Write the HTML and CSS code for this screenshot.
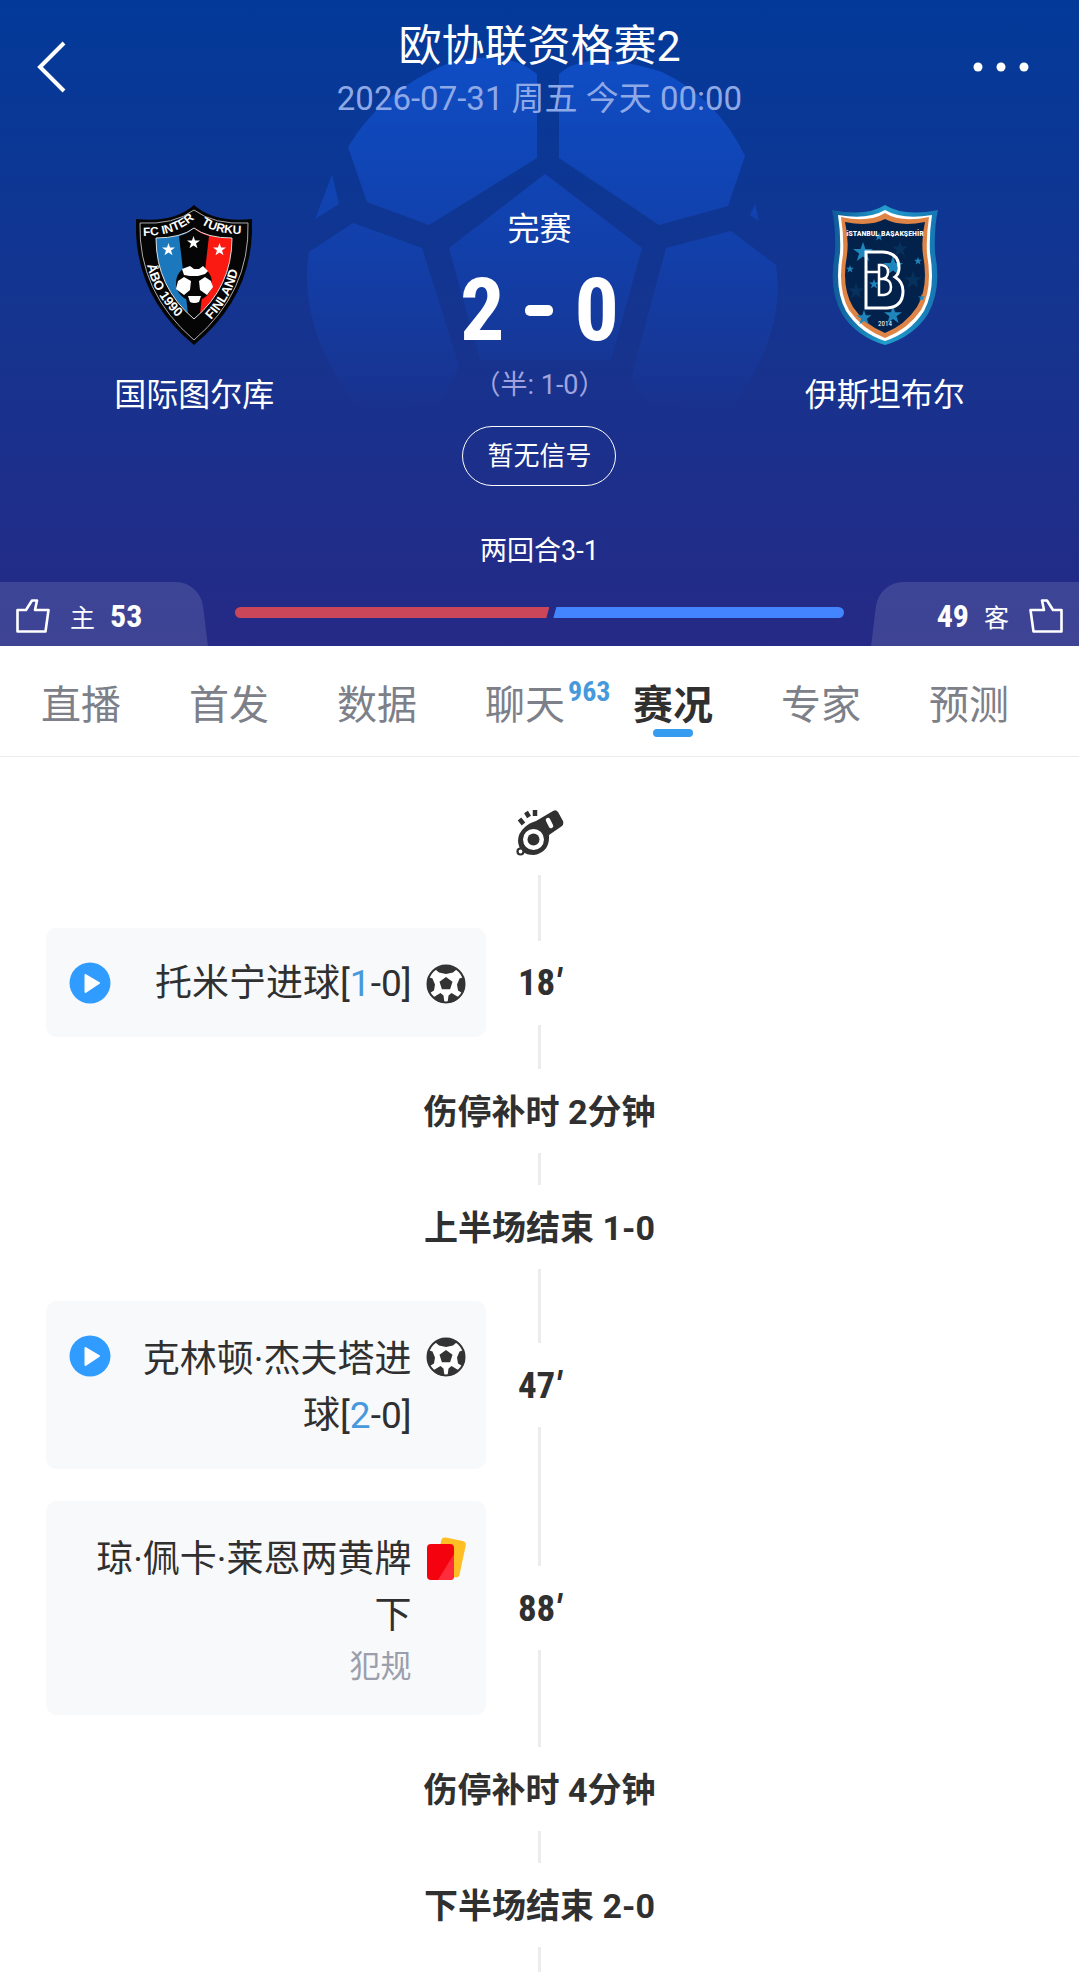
FILE: index.html
```html
<!DOCTYPE html>
<html lang="zh-CN">

<head>
    <meta charset="UTF-8">
    <meta name="viewport" content="width=device-width, initial-scale=1.0">
    <title>欧协联资格赛2</title>
    <link rel="stylesheet" href="styles.css">
</head>

<body>
    <!-- Shared icons -->
    <svg class="sprite" aria-hidden="true">
        <symbol id="ball" viewBox="0 0 40 40">
            <circle cx="20" cy="20" r="18.5" fill="#fff" stroke="#333" stroke-width="2"/>
            <path fill="#333" d="M20 13l6.5 4.7-2.4 7.5h-8.2l-2.4-7.5zM9.500 5.500Q20-2 30.500 5.500L27 8.500 20 10l-7-1.500zM1.500 15Q0 23 3 29.500l5-3 1-6-2.500-6-3-1zM38.500 15Q40 23 37 29.500l-5-3-1-6 2.500-6 3-1zM7 33.500l7.500-4.500 3 2.500 1 7.500Q11 38.500 7 33.500zM33 33.500l-7.500-4.500-3 2.500-1 7.500Q29 38.500 33 33.500z"/>
        </symbol>
        <symbol id="play" viewBox="0 0 42 42">
            <circle cx="21" cy="21" r="20.500" fill="#309cff"/>
            <path d="M16.500 13l13.500 8-13.500 9z" fill="#fff" stroke="#fff" stroke-width="2" stroke-linejoin="round"/>
        </symbol>
        <symbol id="thumb" viewBox="0 0 34 34">
            <path d="M1.500 11h8.500l6-9.500h5l-2 9.500h13.500l-3 21.500h-28z" fill="none" stroke="#fff" stroke-width="2.600" stroke-linejoin="round"/>
        </symbol>
        <symbol id="star" viewBox="0 0 20 20">
            <path d="M10 0l2.400 7H20l-6.100 4.500 2.300 7.500L10 14.500 3.800 19l2.300-7.500L0 7h7.600z"/>
        </symbol>
    </svg>

    <header class="match-header">
        <svg class="header-ball" viewBox="0 0 480 440" aria-hidden="true">
            <defs>
                <linearGradient id="ballFade" gradientUnits="userSpaceOnUse" x1="0" y1="60" x2="0" y2="415">
                    <stop offset="0" stop-color="#1458dc" stop-opacity=".65"/>
                    <stop offset=".5" stop-color="#1450d2" stop-opacity=".4"/>
                    <stop offset="1" stop-color="#1450d2" stop-opacity="0"/>
                </linearGradient>
            </defs>
            <g fill="url(#ballFade)">
                <path d="M46 147Q80 90 147 63 205 48 235 74V158L127 225 65 202Z"/>
                <path d="M257 158V74Q285 48 360 72 415 98 443 156L426 206 357 225Z"/>
                <path d="M243 174L340 248 309 360H178L147 248Z"/>
                <path d="M7 252L51 223 120 248 157 366 140 404 58 412Q-5 330 7 252Z"/>
                <path d="M364 248L429 231 474 265Q485 330 429 412L345 404 329 379Z"/>
                <path d="M30 175L37 204 13 219ZM453 204L457 221 448 215Z"/>
            </g>
        </svg>

        <div class="nav-bar">
            <button type="button" class="nav-button" aria-label="返回">
                <svg width="30" height="54" viewBox="0 0 30 54"><path d="M28 3L4 27l24 24" fill="none" stroke="#fff" stroke-width="4"/></svg>
            </button>
            <div class="nav-title">
                <h1>欧协联资格赛2</h1>
                <p>2026-07-31 周五 今天 00:00</p>
            </div>
            <button type="button" class="nav-button more" aria-label="更多">
                <svg width="56" height="10" viewBox="0 0 56 10" fill="#fff"><circle cx="5" cy="5" r="4.500"/><circle cx="28" cy="5" r="4.500"/><circle cx="51" cy="5" r="4.500"/></svg>
            </button>
        </div>

        <div class="match">
            <div class="team">
                <svg width="116" height="140" viewBox="0 0 116 140" role="img" aria-label="FC Inter Turku">
                    <path d="M0 14Q38 18 58 0 78 18 116 14 119 90 58 140-3 90 0 14Z" fill="#050505"/>
                    <path d="M4 18Q38 20 58 5 78 20 112 18 114 87 58 135 2 87 4 18Z" fill="none" stroke="#aaa"/>
                    <path d="M20 33Q45 33 58 23V114Q20 82 20 33Z" fill="#1b78bd"/>
                    <path d="M96 33Q71 33 58 23V114Q96 82 96 33Z" fill="#fb1a12"/>
                    <path d="M43 31Q52 29 58 23 64 29 73 31L64 109 58 114 52 109Z" fill="#050505"/>
                    <path d="M20 33Q45 33 58 23 71 33 96 33 96 82 58 114 20 82 20 33Z" fill="none" stroke="#ddd"/>
                    <g fill="#fff">
                        <use href="#star" x="26" y="38" width="13" height="13"/>
                        <use href="#star" x="51" y="31" width="13" height="13"/>
                        <use href="#star" x="77" y="38" width="13" height="13"/>
                    </g>
                    <circle cx="58" cy="78" r="18" fill="#050505"/>
                    <path fill="#fff" d="M46 64l8-3 4 3 5 0 4-3 5 5-3 3-7 2-8 0-6-1zM42 76l6-4 7 4-1 9-6 5-8-6zM75 76l-6-4-6 4 1 9 7 5 6-8zM52 91h13l-2 6q-5 2-9 0z"/>
                    <path id="crestTop" d="M7 31Q38 31 57 15" fill="none"/>
                    <path id="crestTop2" d="M65 19Q82 30 110 29" fill="none"/>
                    <path id="crestLeft" d="M11 60Q18 94 51 121" fill="none"/>
                    <path id="crestRight" d="M75 115Q101 88 105 48" fill="none"/>
                    <g class="crest-text">
                        <text font-size="12"><textPath href="#crestTop">FC INTER</textPath></text>
                        <text font-size="12"><textPath href="#crestTop2">TURKU</textPath></text>
                        <text font-size="13"><textPath href="#crestLeft">ÅBO 1990</textPath></text>
                        <text font-size="13"><textPath href="#crestRight">FINLAND</textPath></text>
                    </g>
                </svg>
                <h2>国际图尔库</h2>
            </div>

            <div class="score-box">
                <p class="status">完赛</p>
                <p class="score"><span>2</span><i></i><span>0</span></p>
                <p class="half">（半: 1-0）</p>
                <button type="button" class="signal">暂无信号</button>
                <p class="aggregate">两回合3-1</p>
            </div>

            <div class="team">
                <svg width="106" height="140" viewBox="0 0 106 140" role="img" aria-label="İstanbul Başakşehir">
                    <defs>
                        <linearGradient id="edge" x1="0" x2="1" y1="0" y2="0"><stop offset="0" stop-color="#0e5b99"/><stop offset=".5" stop-color="#229dcc"/><stop offset="1" stop-color="#1676b3"/></linearGradient>
                    </defs>
                    <path d="M0 5Q34 12 53 0 72 12 106 5 102 22 103 48 110 84 96 109 81 132 53 140 25 132 10 109-4 84 3 48 4 22 0 5Z" fill="url(#edge)"/>
                    <path d="M6 10Q36 15 53 5 70 15 100 10 97 30 98 48 104 84 92 106 78 128 53 136 28 128 14 106 2 84 8 48 9 30 6 10Z" fill="#fff"/>
                    <path d="M9 12Q37 18 53 8 69 18 97 12 94 32 95 49 101 84 89 105 76 124 53 133 30 124 17 105 5 84 11 49 12 32 9 12Z" fill="#dd8446"/>
                    <path d="M13 17Q38 22 53 14 68 22 93 17 89 34 91 50 97 82 85 102 73 120 53 128 33 120 21 102 9 82 15 50 17 34 13 17Z" fill="#03224b"/>
                    <g fill="#06315d">
                        <use href="#star" x="60" y="36" width="16" height="16"/>
                        <use href="#star" x="72" y="66" width="18" height="18"/>
                        <use href="#star" x="16" y="78" width="16" height="16"/>
                    </g>
                    <g fill="#1f86bd">
                        <use href="#star" x="20" y="37" width="22" height="20"/>
                        <use href="#star" x="13" y="60" width="10" height="8"/>
                        <use href="#star" x="51" y="51" width="20" height="20"/>
                        <use href="#star" x="82" y="52" width="8" height="8"/>
                        <use href="#star" x="37" y="74" width="10" height="10"/>
                        <use href="#star" x="86" y="88" width="7" height="9"/>
                        <use href="#star" x="23" y="105" width="18" height="15"/>
                        <use href="#star" x="52" y="101" width="18" height="18"/>
                        <use href="#star" x="42" y="27" width="10" height="9"/>
                    </g>
                    <g fill="none" stroke="#fff" stroke-width="3">
                        <path d="M34 47h17q16 1 16 16 0 6-4 9 8 5 8 14 0 16-16 17H34z"/>
                        <path d="M34 67h14M47 60v14h3q6-1 6-7t-6-7zM47 74v16h5q7-1 7-8t-7-8h-5" stroke-width="2.500"/>
                    </g>
                    <g class="crest-text small">
                        <text x="53" y="31" font-size="8" text-anchor="middle">iSTANBUL BAŞAKŞEHİR</text>
                        <text x="53" y="121" font-size="7" text-anchor="middle" font-weight="400">2014</text>
                    </g>
                </svg>
                <h2>伊斯坦布尔</h2>
            </div>
        </div>

        <div class="vote">
            <button type="button" class="vote-side home">
                <svg width="34" height="34"><use href="#thumb"/></svg>
                <span>主</span><b>53</b>
            </button>
            <div class="vote-bar">
                <div class="bar-home" style="flex-grow: 53"></div>
                <div class="bar-away" style="flex-grow: 49"></div>
            </div>
            <button type="button" class="vote-side away">
                <b>49</b><span>客</span>
                <svg class="flip" width="34" height="34"><use href="#thumb"/></svg>
            </button>
        </div>
    </header>

    <nav class="tabs">
        <a href="#">直播</a>
        <a href="#">首发</a>
        <a href="#">数据</a>
        <a href="#">聊天<sup>963</sup></a>
        <a href="#" class="active" aria-current="page">赛况</a>
        <a href="#">专家</a>
        <a href="#">预测</a>
    </nav>

    <main class="timeline">
        <div class="row start">
            <div class="mark">
                <svg width="48" height="50" viewBox="0 0 48 50" role="img" aria-label="开始">
                    <path d="M9 17Q13 13 20 11L37 1q3-2 5 1l5 9q1 3-1 5L33 25q1 17-15 20Q3 45 2 31 2 23 9 17z" fill="#303030"/>
                    <circle cx="17.500" cy="29.500" r="10.500" fill="#fff"/>
                    <circle cx="17.500" cy="29.500" r="6" fill="#303030"/>
                    <path d="M32 10l3 6" stroke="#fff" stroke-width="4.500" stroke-linecap="round"/>
                    <circle cx="4.500" cy="41.500" r="3" fill="#fff" stroke="#303030" stroke-width="2.200"/>
                    <path d="M3.500 9l4 5M10 2l3 5M19 0v6" stroke="#303030" stroke-width="4.500"/>
                </svg>
            </div>
        </div>

        <div class="row event">
            <div class="card single">
                <button type="button" class="play" aria-label="播放"><svg width="42" height="42"><use href="#play"/></svg></button>
                <div class="card-text">托米宁进球[<em>1</em>-0]</div>
                <svg class="card-icon" width="40" height="40"><use href="#ball"/></svg>
            </div>
            <time class="mark">18<i>′</i></time>
        </div>

        <div class="row note"><h3 class="mark">伤停补时 2分钟</h3></div>
        <div class="row note"><h3 class="mark">上半场结束 1-0</h3></div>

        <div class="row event">
            <div class="card">
                <button type="button" class="play" aria-label="播放"><svg width="42" height="42"><use href="#play"/></svg></button>
                <div class="card-text">克林顿·杰夫塔进球[<em>2</em>-0]</div>
                <svg class="card-icon" width="40" height="40"><use href="#ball"/></svg>
            </div>
            <time class="mark">47<i>′</i></time>
        </div>

        <div class="row event">
            <div class="card">
                <div class="card-text">琼·佩卡·莱恩两黄牌下<small>犯规</small></div>
                <svg class="card-icon" width="40" height="44" viewBox="0 0 40 44">
                    <rect x="12" y="2" width="25" height="37" rx="4" fill="#ffbe23" transform="rotate(12 25 20)"/>
                    <rect x="1" y="7" width="27" height="36" rx="4" fill="#f5020f"/>
                    <path d="M28 17v22q0 4-4 4H12z" fill="#ff2c3c"/>
                </svg>
            </div>
            <time class="mark">88<i>′</i></time>
        </div>

        <div class="row note"><h3 class="mark">伤停补时 4分钟</h3></div>
        <div class="row note"><h3 class="mark">下半场结束 2-0</h3></div>
    </main>
</body>

</html>
```
FILE: styles.css
```css
* {
    box-sizing: border-box;
}

body {
    display: flex;
    flex-direction: column;
    min-height: 100vh;
    margin: 0;
    font-family: Roboto, "Noto Sans CJK SC", sans-serif;
    color: #303030;
    background-color: #fff;
}

h1,
h2,
h3,
p {
    margin: 0;
    font-weight: 400;
}

button {
    padding: 0;
    border: none;
    background: none;
    font-family: inherit;
    color: inherit;
    cursor: pointer;
}

svg {
    display: block;
    flex: none;
}

.sprite {
    position: absolute;
    width: 0;
    height: 0;
}

/* Header */
.match-header {
    position: relative;
    overflow: hidden;
    padding-top: 18px;
    color: #fff;
    background: linear-gradient(#033a9a, #15348f 50%, #252a86);
}

.header-ball {
    position: absolute;
    top: 0;
    left: 50%;
    width: 480px;
    margin-left: -238px;
}

.nav-bar,
.match,
.vote {
    position: relative;
}

.nav-bar {
    display: flex;
    justify-content: space-between;
    padding: 0 50px 0 36px;
}

.nav-button {
    display: flex;
    align-items: center;
    width: 80px;
    height: 98px;
}

.nav-button.more {
    justify-content: flex-end;
    width: 66px;
}

.nav-title {
    text-align: center;
}

.nav-title h1 {
    font-size: 43px;
    line-height: 56px;
}

.nav-title p {
    font-size: 33px;
    line-height: 50px;
    color: #8ea9e6;
}

.match {
    display: grid;
    grid-template-columns: 36% 28% 36%;
    padding: 81px 0 13px;
}

.team,
.score-box {
    display: flex;
    flex-direction: column;
    align-items: center;
}

.team h2 {
    margin-top: 28px;
    font-size: 32px;
    line-height: 44px;
}

.crest-text {
    font-family: "Liberation Sans", sans-serif;
    font-weight: 700;
    fill: #fff;
}

.crest-text.small {
    font-family: "Roboto Condensed", Roboto, sans-serif;
}

.status {
    font-size: 32px;
    line-height: 48px;
}

.score {
    display: flex;
    align-items: center;
    gap: 21px;
    margin-top: 12px;
    font-family: "Roboto Condensed", Roboto, sans-serif;
    font-size: 88px;
    font-weight: 700;
    line-height: 90px;
}

.score i {
    width: 28px;
    height: 11px;
    border-radius: 5px;
    background-color: #fff;
}

.half {
    margin-top: 12px;
    font-size: 27px;
    line-height: 36px;
    color: #a0a4de;
}

.signal {
    width: 154px;
    height: 60px;
    margin-top: 23px;
    border: 1px solid #fff;
    border-radius: 30px;
    font-size: 26px;
    line-height: 56px;
}

.aggregate {
    margin-top: 47px;
    font-size: 27px;
    line-height: 36px;
}

/* Votes */
.vote {
    display: flex;
    align-items: center;
    gap: 27px;
    height: 64px;
}

.vote-side {
    position: relative;
    display: flex;
    align-items: center;
    width: 208px;
    height: 64px;
    padding: 4px 16px 0;
    font-size: 25px;
}

.vote-side::before {
    content: "";
    position: absolute;
    inset: 0 4px 0 -20px;
    border-radius: 0 24px 0 0;
    background-color: rgba(255, 255, 255, 0.12);
    transform: skewX(7deg);
}

.vote-side.away {
    justify-content: flex-end;
}

.vote-side.away::before {
    inset: 0 -20px 0 4px;
    border-radius: 24px 0 0 0;
    transform: skewX(-7deg);
}

.vote-side span {
    margin: 0 15px 0 20px;
}

.vote-side.away span {
    margin: 0 20px 0 15px;
}

.vote-side b {
    font-family: "Roboto Condensed", Roboto, sans-serif;
    font-size: 32px;
}

.flip {
    transform: scaleX(-1);
}

.vote-bar {
    display: flex;
    flex: 1;
    gap: 4px;
    height: 11px;
    margin-bottom: 3px;
}

.bar-home {
    border-radius: 6px 0 0 6px;
    background-color: #cb4658;
    clip-path: polygon(0 0, 100% 0, calc(100% - 3px) 100%, 0 100%);
}

.bar-away {
    border-radius: 0 6px 6px 0;
    background-color: #4285ff;
    clip-path: polygon(3px 0, 100% 0, 100% 100%, 0 100%);
}

/* Tabs */
.tabs {
    display: flex;
    height: 111px;
    padding: 0 36px 0 7px;
    border-bottom: 1px solid #ebebeb;
}

.tabs a {
    position: relative;
    flex: 1;
    font-size: 40px;
    line-height: 120px;
    text-align: center;
    color: #7d8088;
    text-decoration: none;
}

.tabs .active {
    font-weight: 700;
    color: #303030;
}

.tabs .active::after {
    content: "";
    position: absolute;
    left: 50%;
    bottom: 19px;
    width: 40px;
    height: 8px;
    margin-left: -20px;
    border-radius: 4px;
    background-color: #359cf0;
}

.tabs sup {
    position: absolute;
    top: 28px;
    left: 117px;
    font-family: "Roboto Condensed", Roboto, sans-serif;
    font-size: 28px;
    font-weight: 700;
    line-height: 36px;
    color: #4799db;
}

/* Timeline */
.timeline {
    flex: 1;
    background: linear-gradient(#ececec, #ececec) center / 3px 100% no-repeat;
}

.mark {
    display: flex;
    align-items: center;
    justify-content: center;
    height: 84px;
    background-color: #fff;
}

.row.start {
    padding-bottom: 37px;
}

.start .mark {
    height: 118px;
    padding-top: 38px;
}

.row.note {
    padding: 16px 0;
}

.note .mark {
    padding-bottom: 4px;
    font-size: 34px;
    font-weight: 700;
}

.row.event {
    display: grid;
    grid-template-columns: 1fr 108px 1fr;
    align-items: center;
    padding: 16px 0;
}

.event .mark {
    font-family: "Roboto Condensed", Roboto, sans-serif;
    font-size: 37px;
    font-weight: 700;
}

.card {
    display: flex;
    align-items: flex-start;
    margin-left: 46px;
    padding: 28px 20px 25px 23px;
    border-radius: 10px;
    background-color: #f8f9fb;
}

.play {
    flex: none;
    margin-top: 6px;
}

.card-text {
    flex: 1;
    padding-top: 3px;
    font-size: 37px;
    line-height: 56px;
    text-align: right;
}

.card.single .card-text {
    padding-top: 0;
}

.card-text em {
    font-style: normal;
    color: #4799db;
}

.card-text small {
    display: block;
    font-size: 31px;
    line-height: 46px;
    color: #9b9fab;
}

.card-icon {
    margin: 8px 0 0 14px;
}
```
